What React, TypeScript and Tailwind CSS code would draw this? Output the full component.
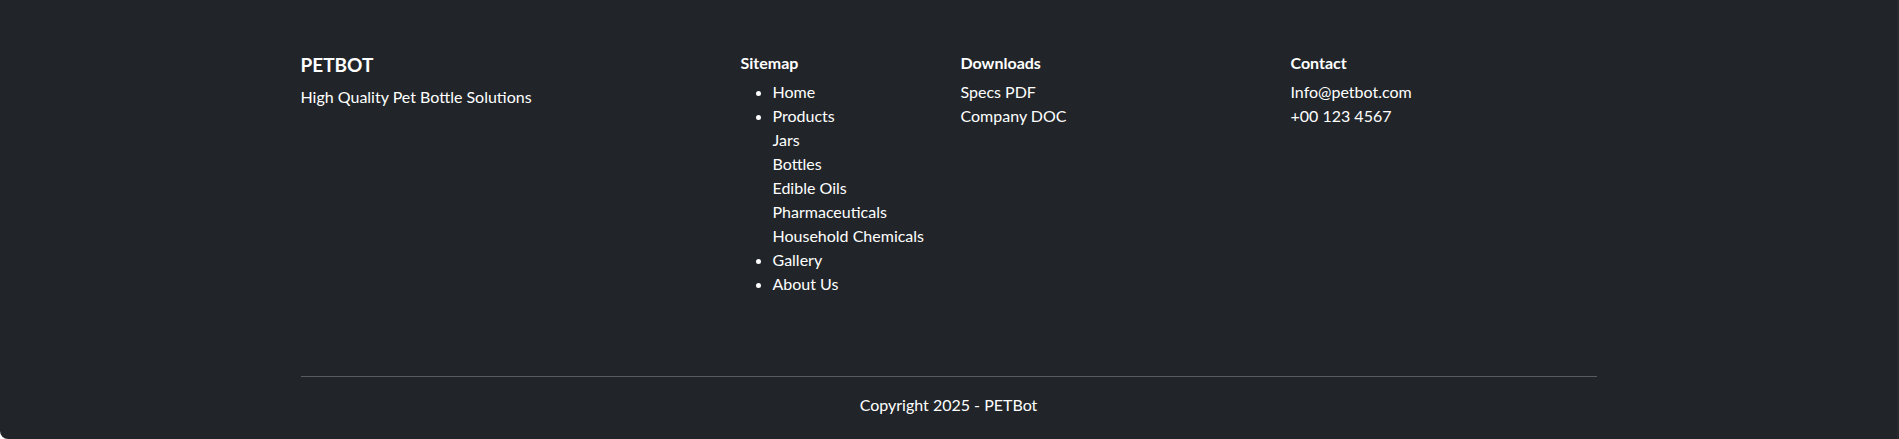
import React from "react";

const sitemapTop = ["Home", "Products"];
const productItems = ["Jars", "Bottles", "Edible Oils", "Pharmaceuticals", "Household Chemicals"];

export default function App() {
  return (
    <footer className="bg-[#212529] text-white font-['Lato',sans-serif] rounded-bl-lg border-r-2 border-r-[#272a2e] pt-[53px] pb-[22px]">
      <div className="mx-auto w-[1296px]">
        <div className="grid grid-cols-12 gap-x-6">
          <div className="col-span-4">
            <h5 className="text-[19px] font-bold leading-6 mb-2">PETBOT</h5>
            <p className="text-base leading-6">High Quality Pet Bottle Solutions</p>
          </div>
          <div className="col-span-2">
            <h6 className="text-base font-bold leading-[19px] mb-2">Sitemap</h6>
            <ul className="list-disc pl-8 text-base leading-6">
              {sitemapTop.map((s) => (
                <li key={s}>{s}</li>
              ))}
              <li className="list-none">
                <ul className="list-none pl-0">
                  {productItems.map((s) => (
                    <li key={s}>{s}</li>
                  ))}
                </ul>
              </li>
              <li>Gallery</li>
              <li>About Us</li>
            </ul>
          </div>
          <div className="col-span-3">
            <h6 className="text-base font-bold leading-[19px] mb-2">Downloads</h6>
            <ul className="list-none pl-0 text-base leading-6">
              <li>Specs PDF</li>
              <li>Company DOC</li>
            </ul>
          </div>
          <div className="col-span-3">
            <h6 className="text-base font-bold leading-[19px] mb-2">Contact</h6>
            <ul className="list-none pl-0 text-base leading-6">
              <li>Info@petbot.com</li>
              <li>+00 123 4567</li>
            </ul>
          </div>
        </div>
        <hr className="mt-[80px] border-0 border-t border-[#595c5f]" />
        <p className="mt-[16px] text-center text-base leading-6">Copyright 2025 - PETBot</p>
      </div>
    </footer>
  );
}
